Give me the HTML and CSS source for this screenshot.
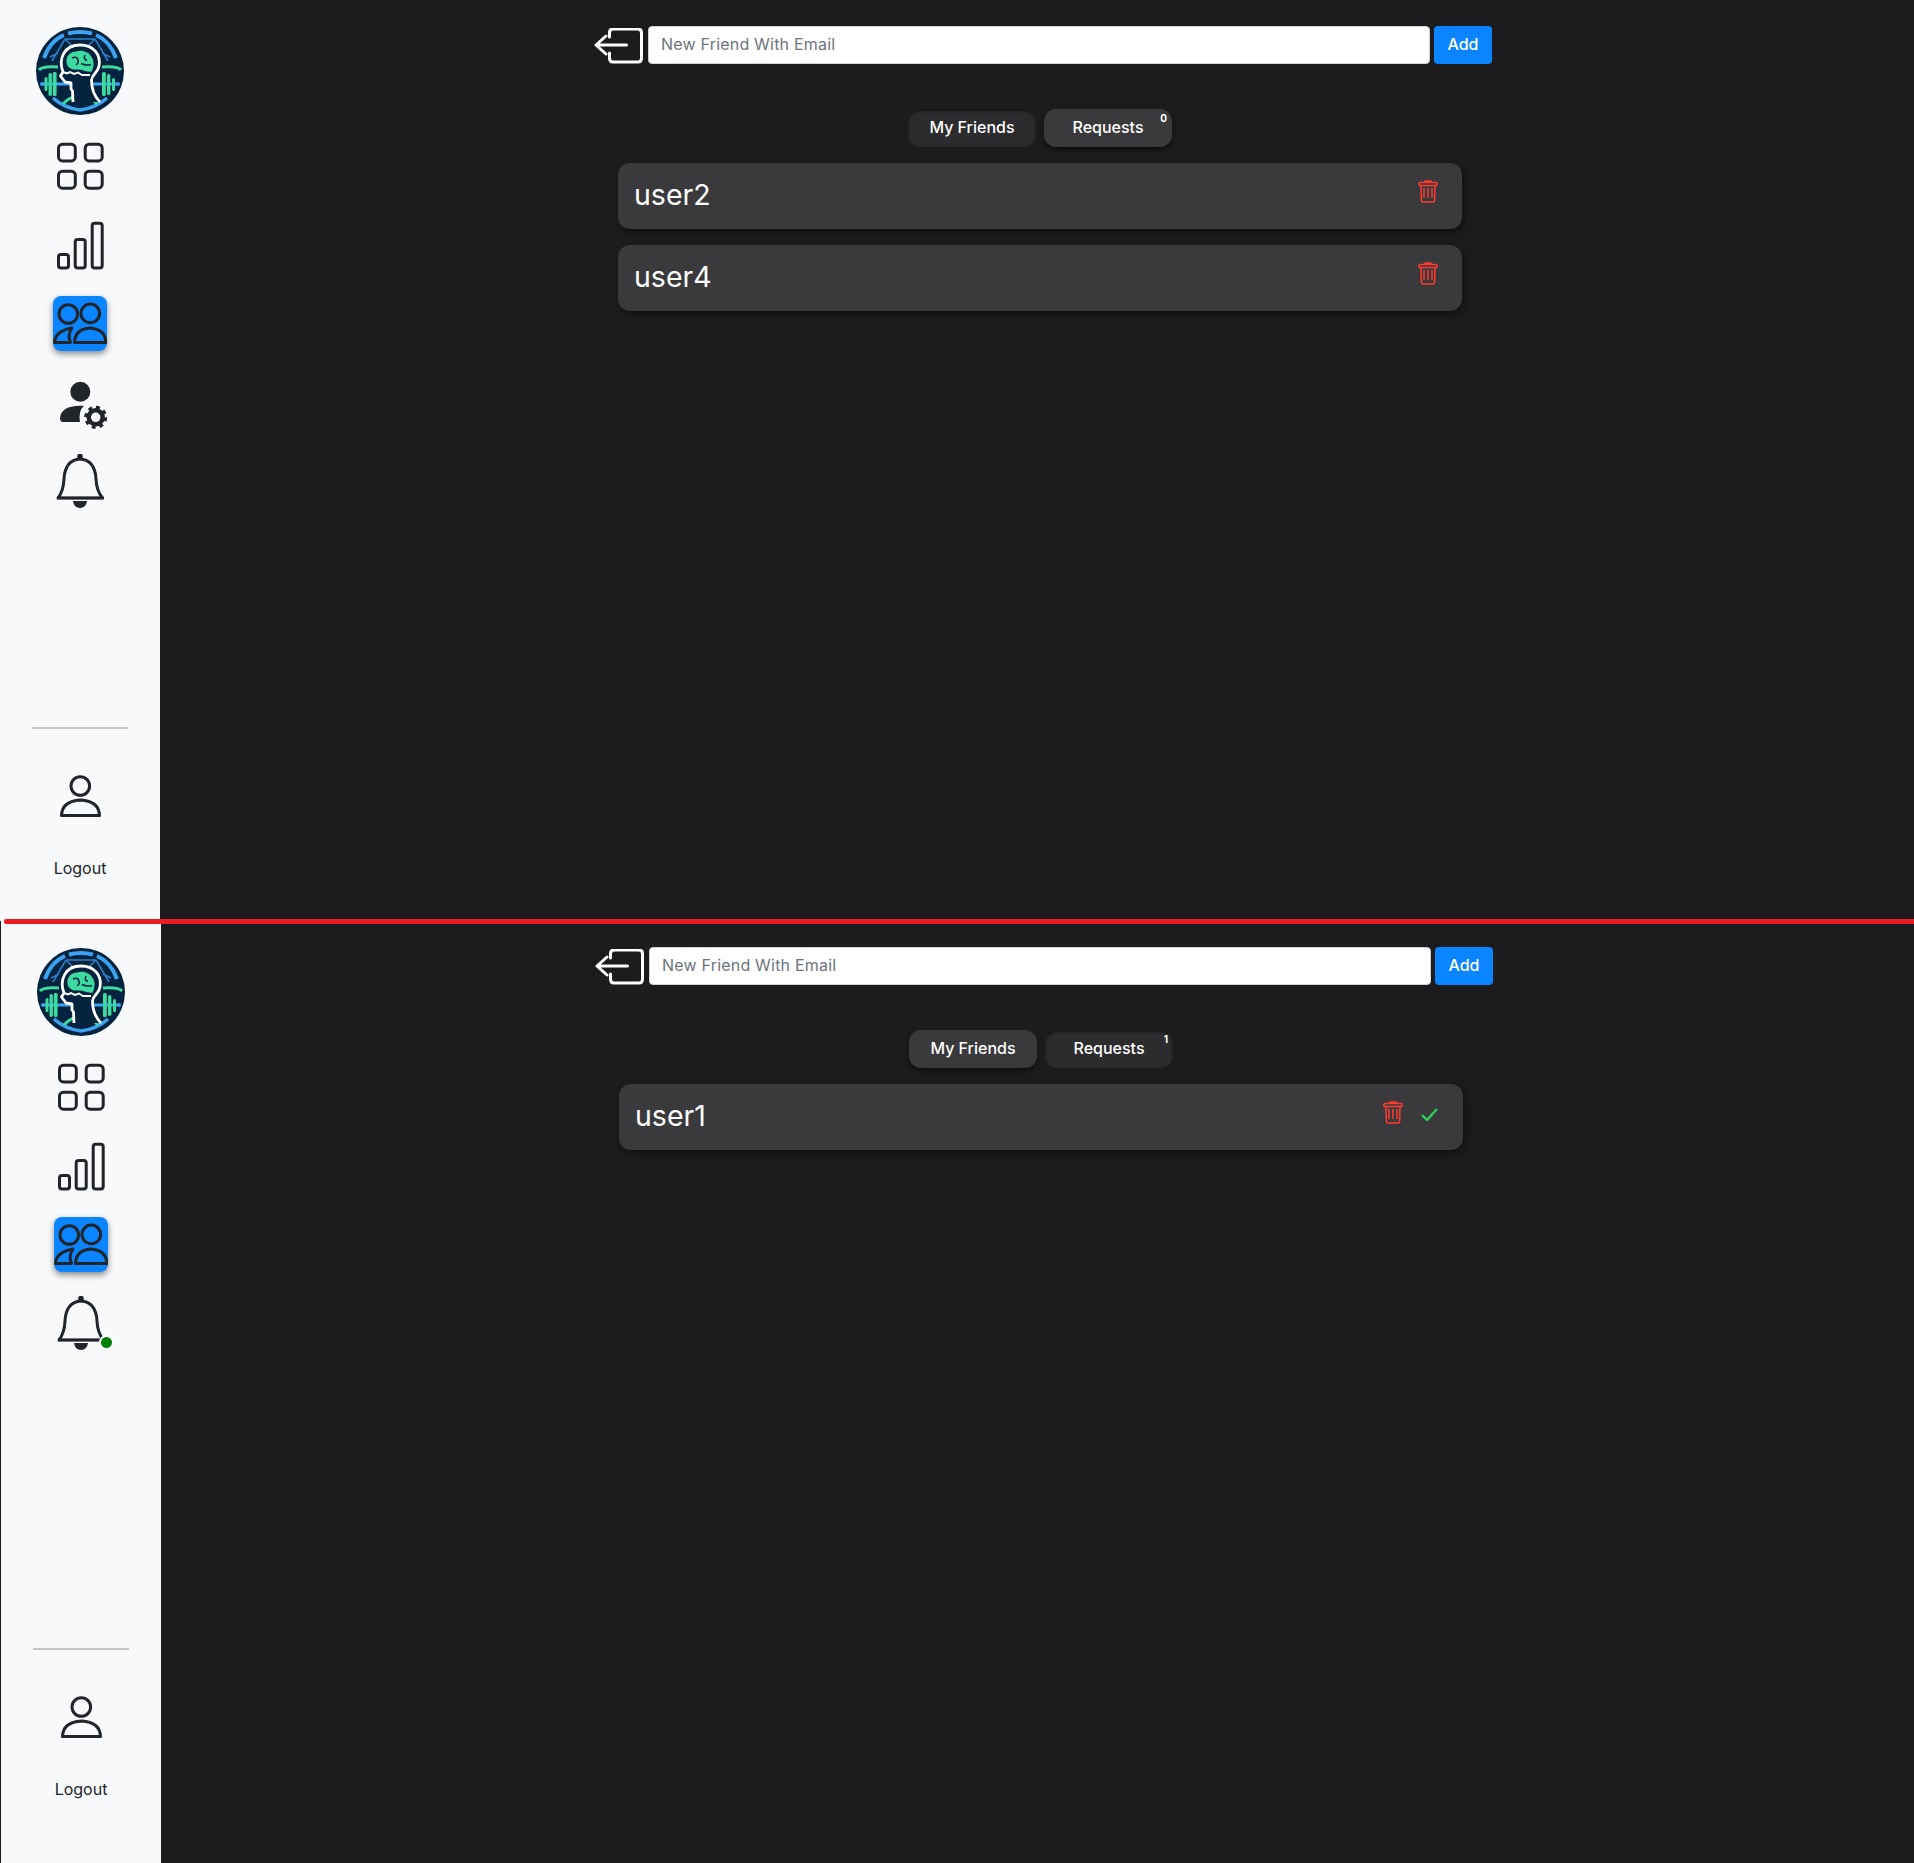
FILE: index.html
```html
<!DOCTYPE html>
<html lang="en">
<head>
<meta charset="utf-8">
<title>Friends</title>
<link rel="stylesheet" href="styles.css">
</head>
<body>
<svg class="defs" aria-hidden="true">
  <defs>
    <symbol id="logo" viewBox="0 0 88 88">
      <circle cx="44" cy="44" r="44" fill="#04233f"/>
      <path d="M32 6.500Q44 3.500 56 6.500" class="lb" stroke-width="4"/>
      <path d="M28 8Q14 14 8 31" class="lb" stroke-width="4"/>
      <path d="M60 8Q74 14 80 31" class="lb" stroke-width="4"/>
      <path d="M17 71Q28 81 44 83Q60 81 71 71" class="lb" stroke-width="3.400"/>
      <path d="M29 12H59M29 12L16 34M59 12L72 34M29 12L37 20M59 12L51 20M14 30L22 26M74 30L66 26" fill="none" stroke="#2f7fc8" stroke-width="1.500"/>
      <path d="M3 43Q6 39 22 40M66 40Q82 39 85 43" fill="none" stroke="#3ddba0" stroke-width="3"/>
      <path d="M7 57H81" class="lb" stroke-width="3"/>
      <circle cx="6" cy="57" r="2" fill="#3ba3f0"/><circle cx="82" cy="57" r="2" fill="#3ba3f0"/>
      <rect x="8.500" y="50" width="3" height="14" rx="1.500" fill="#3ddba0"/>
      <rect x="12.500" y="46" width="3.400" height="23" rx="1.700" fill="#3ddba0"/>
      <rect x="16.800" y="45" width="3.800" height="24" rx="1.500" fill="#3ddba0"/>
      <rect x="66" y="45" width="3.800" height="24" rx="1.500" fill="#3ddba0"/>
      <rect x="71" y="47" width="3.400" height="21" rx="1.700" fill="#3ddba0"/>
      <rect x="76" y="51" width="3" height="13" rx="1.500" fill="#3ddba0"/>
      <path d="M27 77Q34 69 44 69Q54 69 61 77" fill="none" stroke="#3ddba0" stroke-width="3"/>
      <path d="M37 75V64L35 62V56L27 54L24 49L27 45C22 32 28 18 44 18C58 18 65 28 63 39C62 46 57 48 56 53C56 62 59 70 64 75Z" fill="#04233f"/>
      <path d="M37 75L36.500 64L35 62V56L29 55L24.500 49L27 45C22 32 28 18 44 18C58 18 65 28 63 39C62 46 56 47 55.500 53C55.500 62 59 70 64 75" fill="none" stroke="#fff" stroke-width="2.800" stroke-linejoin="round"/>
      <path d="M27 45L31 46.500L34 45L38 47L42 45.500L46 48L54 48" fill="none" stroke="#fff" stroke-width="2"/>
      <path d="M30.500 35C30 28 35 25 40 24.500C46 22.500 53 25 55.500 30C58.500 34 58 40 55.500 44.800C50 45 46 42 41 42.500C36 43 31 41 30.500 35Z" fill="#3ddba0"/>
      <path d="M36 31Q41 29 42 33Q43 36 40 38M49 28Q47 32 51 33.500M45 36.500Q50 39 55 37.500" fill="none" stroke="#04233f" stroke-width="1.500"/>
    </symbol>
    <symbol id="trash" viewBox="0 0 20 23">
      <g fill="none" stroke="#ff3b30" stroke-width="1.500" stroke-linejoin="round" stroke-linecap="round">
        <path d="M7 1.200H13" stroke-width="1.800"/>
        <rect x=".8" y="2.500" width="18.400" height="3" rx="1.200"/>
        <path d="M3 5.500L3.400 20.500Q3.500 22 5 22H15Q16.500 22 16.600 20.500L17 5.500"/>
        <path d="M6 8.500V17.500M10 8.500V17.500M14 8.500V17.500"/>
      </g>
    </symbol>
    <symbol id="bell" viewBox="53 453 54 54">
      <circle cx="80" cy="455.500" r="2.800" fill="#212529"/>
      <path d="M58 497Q63.500 490 64 478Q65 459 80 458Q95 459 96 478Q96.500 490 102.500 497Z" fill="none" stroke="#212529" stroke-width="3" stroke-linejoin="round"/>
      <path d="M57 497H104" stroke="#212529" stroke-width="2.600"/>
      <path d="M73 500H87Q86 507 80 507Q74 507 73 500Z" fill="#212529"/>
    </symbol>
    <symbol id="friends" viewBox="53 296 54 55">
      <g fill="none" stroke="#212529" stroke-width="3" stroke-linejoin="round">
        <circle cx="68.300" cy="314" r="9.300"/>
        <circle cx="90.300" cy="313.400" r="9.300"/>
        <path d="M54.500 342.500Q55 331 72 328Q67 335 70.500 342.500Z"/>
        <path d="M74.500 342.500Q75 329 90 328Q105 329 106 342.500Z"/>
      </g>
    </symbol>
    <symbol id="dash" viewBox="53 138 54 54">
      <g fill="none" stroke="#212529" stroke-width="3">
        <rect x="58.500" y="144.200" width="16.800" height="16.700" rx="4"/>
        <rect x="85.200" y="144.200" width="17" height="16.700" rx="4"/>
        <rect x="58.500" y="171.200" width="16.800" height="17" rx="4"/>
        <rect x="85.200" y="171.200" width="17" height="17" rx="4"/>
      </g>
    </symbol>
    <symbol id="chart" viewBox="53 217 54 54">
      <g fill="none" stroke="#212529" stroke-width="3">
        <rect x="58.500" y="254.500" width="10" height="13.500" rx="2.500"/>
        <rect x="75.200" y="239.500" width="10" height="28.500" rx="2.500"/>
        <rect x="92.200" y="223.200" width="10" height="44.800" rx="2.500"/>
      </g>
    </symbol>
    <symbol id="back" viewBox="594 28 50 36">
      <path d="M609.500 37V33Q609.500 29 613 29H638Q641.500 29 641.500 33V58Q641.500 62 638 62H613Q609.500 62 609.500 58V53M626.500 45H596M606 36L596 45L606 54" fill="none" stroke="#fff" stroke-width="3" stroke-linecap="round" stroke-linejoin="round"/>
    </symbol>
    <symbol id="user" viewBox="53 774 54 54">
      <circle cx="80.300" cy="786" r="9.300" fill="none" stroke="#212529" stroke-width="3"/>
      <path d="M61.500 815.500Q62 801 80.500 800Q99 801 99.500 815.500Z" fill="none" stroke="#212529" stroke-width="3" stroke-linejoin="round"/>
    </symbol>
    <symbol id="usergear" viewBox="53 375 54 54">
      <circle cx="80.300" cy="391.700" r="10" fill="#212529"/>
      <path d="M60 418Q61 406 80 405.700H84Q78 411 80 422H63Q60 422 60 418Z" fill="#212529"/>
      <circle cx="95.700" cy="417.300" r="7" fill="none" stroke="#212529" stroke-width="4.500"/>
      <circle cx="95.700" cy="417.300" r="10" fill="none" stroke="#212529" stroke-width="3" stroke-dasharray="3.900 3.950"/>
    </symbol>
  </defs>
</svg>

<section class="screen">
  <aside class="sidebar">
    <svg class="logo"><use href="#logo"/></svg>
    <nav class="nav">
      <a class="nav-item"><svg class="nav-icon"><use href="#dash"/></svg></a>
      <a class="nav-item"><svg class="nav-icon"><use href="#chart"/></svg></a>
      <a class="nav-item nav-item-active"><svg class="nav-icon"><use href="#friends"/></svg></a>
      <a class="nav-item"><svg class="nav-icon"><use href="#usergear"/></svg></a>
      <a class="nav-item"><svg class="nav-icon"><use href="#bell"/></svg></a>
    </nav>
    <div class="sidebar-foot">
      <svg class="nav-icon user-icon"><use href="#user"/></svg>
      <span class="logout">Logout</span>
    </div>
  </aside>
  <main class="main">
    <form class="add-row">
      <svg class="back"><use href="#back"/></svg>
      <input class="add-input" type="text" placeholder="New Friend With Email">
      <button class="add-btn" type="button">Add</button>
    </form>
    <div class="tabs">
      <button class="tab tab-pressed" type="button">My Friends</button>
      <button class="tab tab-raised" type="button">Requests<span class="badge">0</span></button>
    </div>
    <ul class="list">
      <li class="card"><span class="card-name">user2</span><svg class="trash"><use href="#trash"/></svg></li>
      <li class="card"><span class="card-name">user4</span><svg class="trash"><use href="#trash"/></svg></li>
    </ul>
  </main>
</section>

<div class="divider-line"></div>

<section class="screen screen-second">
  <aside class="sidebar">
    <svg class="logo"><use href="#logo"/></svg>
    <nav class="nav">
      <a class="nav-item"><svg class="nav-icon"><use href="#dash"/></svg></a>
      <a class="nav-item"><svg class="nav-icon"><use href="#chart"/></svg></a>
      <a class="nav-item nav-item-active"><svg class="nav-icon"><use href="#friends"/></svg></a>
      <a class="nav-item nav-item-dot"><svg class="nav-icon"><use href="#bell"/></svg><span class="dot"></span></a>
    </nav>
    <div class="sidebar-foot">
      <svg class="nav-icon user-icon"><use href="#user"/></svg>
      <span class="logout">Logout</span>
    </div>
  </aside>
  <main class="main">
    <form class="add-row">
      <svg class="back"><use href="#back"/></svg>
      <input class="add-input" type="text" placeholder="New Friend With Email">
      <button class="add-btn" type="button">Add</button>
    </form>
    <div class="tabs">
      <button class="tab tab-raised" type="button">My Friends</button>
      <button class="tab tab-pressed" type="button">Requests<span class="badge">1</span></button>
    </div>
    <ul class="list">
      <li class="card"><span class="card-name">user1</span>
        <svg class="trash trash-pending"><use href="#trash"/></svg>
        <svg class="check" viewBox="0 0 17 13"><path d="M1 7L6 12L16 1" fill="none" stroke="#30d158" stroke-width="2.400"/></svg>
      </li>
    </ul>
  </main>
</section>
</body>
</html>
```

FILE: styles.css
```css
* { box-sizing: border-box; }

html, body {
  margin: 0;
  padding: 0;
  background: #1c1c1e;
  overflow-x: hidden;
}

body {
  position: relative;
  width: 1914px;
  font-family: Inter, "Open Sans", "Liberation Sans", sans-serif;
}

.defs { width: 0; height: 0; position: absolute; }

.lb { fill: none; stroke: #3ba3f0; }

.screen {
  display: flex;
  height: 921px;
}

.screen-second {
  height: 942px;
  width: 1913px;
  margin-left: 1px;
}

.sidebar {
  flex: 0 0 160px;
  background: #f8f9fa;
  padding-top: 27px;
  display: flex;
  flex-direction: column;
  align-items: center;
}

.logo {
  width: 88px;
  height: 88px;
  flex: none;
}

.nav {
  width: 100%;
  height: 589px;
  margin-top: 23px;
  flex: none;
  display: flex;
  flex-direction: column;
  align-items: center;
  gap: 25px;
}

.nav-item {
  position: relative;
  width: 54px;
  height: 54px;
  display: block;
  flex: none;
}

.nav-item-active {
  height: 55px;
  margin-bottom: -1px;
  background: #0a84ff;
  border-radius: 8px;
  box-shadow: 0 3px 6px rgba(0, 0, 0, .45);
}

.nav-icon {
  display: block;
  width: 54px;
  height: 54px;
  overflow: visible;
}

.nav-item-active .nav-icon { height: 55px; }

.dot {
  position: absolute;
  left: 44.500px;
  top: 38.500px;
  width: 15px;
  height: 15px;
  border-radius: 50%;
  background: #008000;
  border: 2px solid #fff;
}

.sidebar-foot {
  width: 96px;
  border-top: 2px solid #c4c5c7;
  display: flex;
  flex-direction: column;
  align-items: center;
}

.user-icon { margin-top: 45px; }

.logout {
  margin-top: 28px;
  font-size: 16px;
  line-height: 24px;
  color: #212529;
}

.main {
  flex: 0 0 1754px;
  padding: 26px 0 0 6px;
  display: flex;
  flex-direction: column;
  align-items: center;
}

.add-row {
  margin: 0 0 0 6px;
  width: 898px;
  height: 38px;
  display: flex;
  align-items: center;
}

.back {
  width: 50px;
  height: 36px;
  margin-top: 2px;
  flex: none;
}

.add-input {
  width: 782px;
  height: 38px;
  margin-left: 4px;
  padding: 0 12px 2px;
  font: 400 16px Inter, "Open Sans", sans-serif;
  letter-spacing: .2px;
  color: #212529;
  background: #fff;
  border: 1px solid #ced4da;
  border-radius: 4px;
  outline: 0;
}

.add-input::placeholder { color: #6c757d; opacity: 1; }

.add-btn {
  width: 58px;
  height: 38px;
  margin-left: 4px;
  padding: 0 0 3px;
  font: 500 16px Inter, "Open Sans", sans-serif;
  color: #fff;
  background: #0a84ff;
  border: 0;
  border-radius: 4px;
}

.tabs {
  margin-top: 45px;
  display: flex;
  gap: 8px;
}

.tab {
  position: relative;
  width: 128px;
  height: 38px;
  padding: 0 0 2px;
  font: 500 16px Inter, "Open Sans", sans-serif;
  color: #fff;
  border: 0;
  border-radius: 12px;
}

.tab-pressed {
  background: #2c2c2e;
  box-shadow: inset 0 2px 3px rgba(0, 0, 0, .55);
}

.tab-raised {
  background: #3a3a3c;
  box-shadow: 0 3px 5px rgba(0, 0, 0, .5);
}

.badge {
  position: absolute;
  top: 2px;
  right: 5px;
  font-size: 10px;
  line-height: 15px;
  font-weight: 700;
}

.list {
  list-style: none;
  margin: 16px 0 0;
  padding: 0;
  display: flex;
  flex-direction: column;
  gap: 16px;
}

.card {
  position: relative;
  width: 844px;
  height: 66px;
  padding: 0 24px 0 16px;
  display: flex;
  align-items: center;
  background: #3a3a3c;
  border-radius: 12px;
  box-shadow: 2px 3px 6px rgba(0, 0, 0, .5);
  color: #fff;
}

.card-name {
  flex: 1;
  font-size: 28.500px;
  font-weight: 400;
  margin-top: -3px;
}

.trash {
  width: 20px;
  height: 23px;
  margin-top: -9px;
  flex: none;
}

.trash-pending { margin-right: 18px; margin-left: -1px; }

.check {
  width: 17px;
  height: 13px;
  flex: none;
  margin-top: -6px;
  margin-right: 1px;
}

.divider-line {
  position: absolute;
  left: 4px;
  right: 0;
  top: 919px;
  height: 5px;
  background: #ed1c24;
  border-radius: 2px 0 0 2px;
}
```
